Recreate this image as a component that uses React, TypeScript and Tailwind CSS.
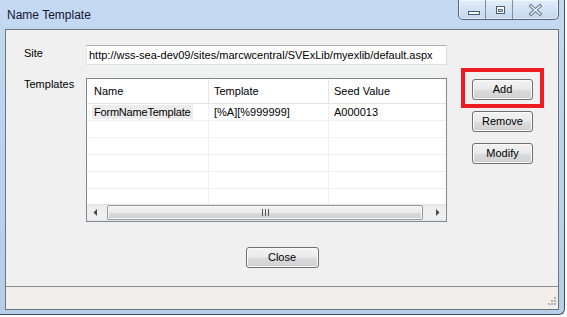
import React from "react";

function WinButton({ label, className }: { label: string; className: string }) {
  return (
    <div
      className={
        "flex items-center justify-center h-[21px] rounded-[3px] border border-[#707070] bg-[linear-gradient(to_bottom,#f2f2f2_0%,#ebebeb_48%,#dddddd_52%,#cfcfcf_100%)] shadow-[inset_0_0_0_1px_#fbfbfb] text-[11px] leading-[13px] text-black " +
        className
      }
    >
      {label}
    </div>
  );
}

function Row({ children }: { children?: React.ReactNode }) {
  return (
    <div className="flex h-[17px] shrink-0 border-b border-[#f0f0f0]">
      <div className="w-[122px] shrink-0 border-r border-[#f0f0f0] flex items-start">
        {children}
      </div>
      <div className="w-[120px] shrink-0 border-r border-[#f0f0f0]" />
      <div className="flex-1" />
    </div>
  );
}

export default function App() {
  return (
    <div className="w-[567px] h-[317px] bg-white overflow-hidden font-['Liberation_Sans',Arial,sans-serif]">
      <div className="w-[565px] h-[315px] flex flex-col border-r border-b border-[#3f4e61] rounded-br-[6px] bg-[linear-gradient(to_bottom,#c5daf2_0%,#bcd3ee_40%,#b7cee9_100%)] px-[5px] pb-[4px]">
        {/* Title bar */}
        <div className="flex items-start h-[29px] shrink-0">
          <div className="pl-[2px] pt-[8px] text-[12px] leading-[15px] text-[#141433]">Name Template</div>
          <div className="ml-auto flex h-[20px] border border-t-0 border-[#55677f] rounded-b-[5px] overflow-hidden bg-[linear-gradient(to_bottom,#e3edf9_0%,#d3e2f4_50%,#c4d7ee_100%)] shadow-[inset_0_0_0_1px_rgba(255,255,255,0.5)]">
            <div className="w-[27px] h-full border-r border-[#7d8ea5]">
              <svg width="27" height="19" viewBox="0 0 27 19">
                <rect x="9.5" y="11.5" width="11" height="3" fill="#ffffff" stroke="#4a5a70" />
              </svg>
            </div>
            <div className="w-[27px] h-full border-r border-[#7d8ea5]">
              <svg width="27" height="19" viewBox="0 0 27 19">
                <rect x="10.5" y="6.5" width="8" height="7" fill="#ffffff" stroke="#4a5a70" />
                <rect x="12.5" y="9.5" width="4" height="2" fill="#b9cce4" stroke="#4a5a70" strokeWidth="0.8" />
              </svg>
            </div>
            <div className="w-[45px] h-full">
              <svg width="45" height="19" viewBox="0 0 45 19">
                <path d="M18 6 L27 14 M27 6 L18 14" stroke="#6a7a90" strokeWidth="3.4" strokeLinecap="square" />
                <path d="M18 6 L27 14 M27 6 L18 14" stroke="#f4f7fb" strokeWidth="1.4" strokeLinecap="square" />
              </svg>
            </div>
          </div>
        </div>

        {/* Client */}
        <div className="flex-1 flex flex-col border border-[#6f747c] bg-[#f0f0f0]">
          <div className="relative flex-1 flex flex-col">
            {/* Site row */}
            <div className="flex items-start mt-[15px] ml-[18px]">
              <div className="w-[62px] mt-[2px] text-[11px] leading-[13px] text-black">Site</div>
              <div className="w-[361px] h-[20px] bg-white border border-[#dbdfe6] border-t-[#abadb3] border-l-[#e2e3ea] pl-[2px] text-[11px] leading-[18px] text-black whitespace-nowrap overflow-hidden">
                http://wss-sea-dev09/sites/marcwcentral/SVExLib/myexlib/default.aspx
              </div>
            </div>

            {/* Templates row */}
            <div className="flex items-start mt-[13px] ml-[18px]">
              <div className="w-[62px] text-[11px] leading-[13px] text-black">Templates</div>
              <div className="w-[361px] h-[144px] flex flex-col bg-white border border-[#828790]">
                {/* header */}
                <div className="flex h-[25px] shrink-0 border-b border-[#e5e5e5] text-[11px] leading-[13px] text-black">
                  <div className="w-[122px] shrink-0 border-r border-[#e5e5e5] pl-[7px] pt-[6px]">Name</div>
                  <div className="w-[120px] shrink-0 border-r border-[#e5e5e5] pl-[5px] pt-[6px]">Template</div>
                  <div className="flex-1 pl-[5px] pt-[6px]">Seed Value</div>
                </div>
                {/* rows */}
                <div className="flex-1 flex flex-col overflow-hidden text-[11px] text-black">
                  <div className="flex h-[17px] shrink-0 border-b border-[#f0f0f0]">
                    <div className="w-[122px] shrink-0 border-r border-[#f0f0f0] flex items-start">
                      <span className="ml-[5px] mt-[1px] pl-[2px] pr-[3px] leading-[14px] tracking-[-0.2px] bg-[#ececec]">FormNameTemplate</span>
                    </div>
                    <div className="w-[120px] shrink-0 border-r border-[#f0f0f0] pl-[5px] pt-[1px] leading-[14px]">[%A][%999999]</div>
                    <div className="flex-1 pl-[5px] pt-[1px] leading-[14px]">A000013</div>
                  </div>
                  <Row />
                  <Row />
                  <Row />
                  <Row />
                  <Row />
                </div>
                {/* scrollbar */}
                <div className="flex h-[17px] shrink-0 bg-[linear-gradient(to_bottom,#e3e3e3_0%,#eeeeee_20%,#f0f0f0_80%,#e6e6e6_100%)]">
                  <div className="w-[17px] h-full flex items-center justify-center">
                    <svg width="5" height="7" viewBox="0 0 5 7">
                      <path d="M4 0 L0.5 3.5 L4 7 Z" fill="#4a4a4a" />
                    </svg>
                  </div>
                  <div className="ml-[3px] mt-[1px] w-[316px] h-[15px] rounded-[2px] border border-[#979797] bg-[linear-gradient(to_bottom,#f4f4f4_0%,#e9e9e9_50%,#d9d9d9_55%,#d0d0d0_100%)] shadow-[inset_0_0_0_1px_#f8f8f8] flex items-center justify-center">
                    <svg width="7" height="7" viewBox="0 0 7 7">
                      <path d="M0.5 0 V7 M3.5 0 V7 M6.5 0 V7" stroke="#5a5a5a" strokeWidth="1" />
                    </svg>
                  </div>
                  <div className="ml-auto w-[17px] h-full flex items-center justify-center">
                    <svg width="5" height="7" viewBox="0 0 5 7">
                      <path d="M1 0 L4.5 3.5 L1 7 Z" fill="#4a4a4a" />
                    </svg>
                  </div>
                </div>
              </div>
              <div className="ml-[25px] mt-[1px] flex flex-col gap-[11px]">
                <WinButton label="Add" className="w-[61px]" />
                <WinButton label="Remove" className="w-[61px]" />
                <WinButton label="Modify" className="w-[61px]" />
              </div>
            </div>

            {/* Close */}
            <div className="flex justify-center mt-[25px]">
              <WinButton label="Close" className="w-[73px]" />
            </div>

            {/* red highlight annotation */}
            <div className="absolute left-[455px] top-[38px] w-[83px] h-[40px] border-[4px] border-[#ed1c24]" />
          </div>

          {/* status bar */}
          <div className="h-[23px] shrink-0 border-t border-[#8e8e8e] bg-[#f1eeec] flex items-end justify-end">
            <svg width="10" height="10" viewBox="0 0 10 10" className="mr-[1px] mb-[3px]">
              <rect x="7" y="1" width="2" height="2" fill="#b5b2ad" />
              <rect x="4" y="4" width="2" height="2" fill="#b5b2ad" />
              <rect x="7" y="4" width="2" height="2" fill="#b5b2ad" />
              <rect x="1" y="7" width="2" height="2" fill="#b5b2ad" />
              <rect x="4" y="7" width="2" height="2" fill="#b5b2ad" />
              <rect x="7" y="7" width="2" height="2" fill="#b5b2ad" />
            </svg>
          </div>
        </div>
      </div>
    </div>
  );
}
